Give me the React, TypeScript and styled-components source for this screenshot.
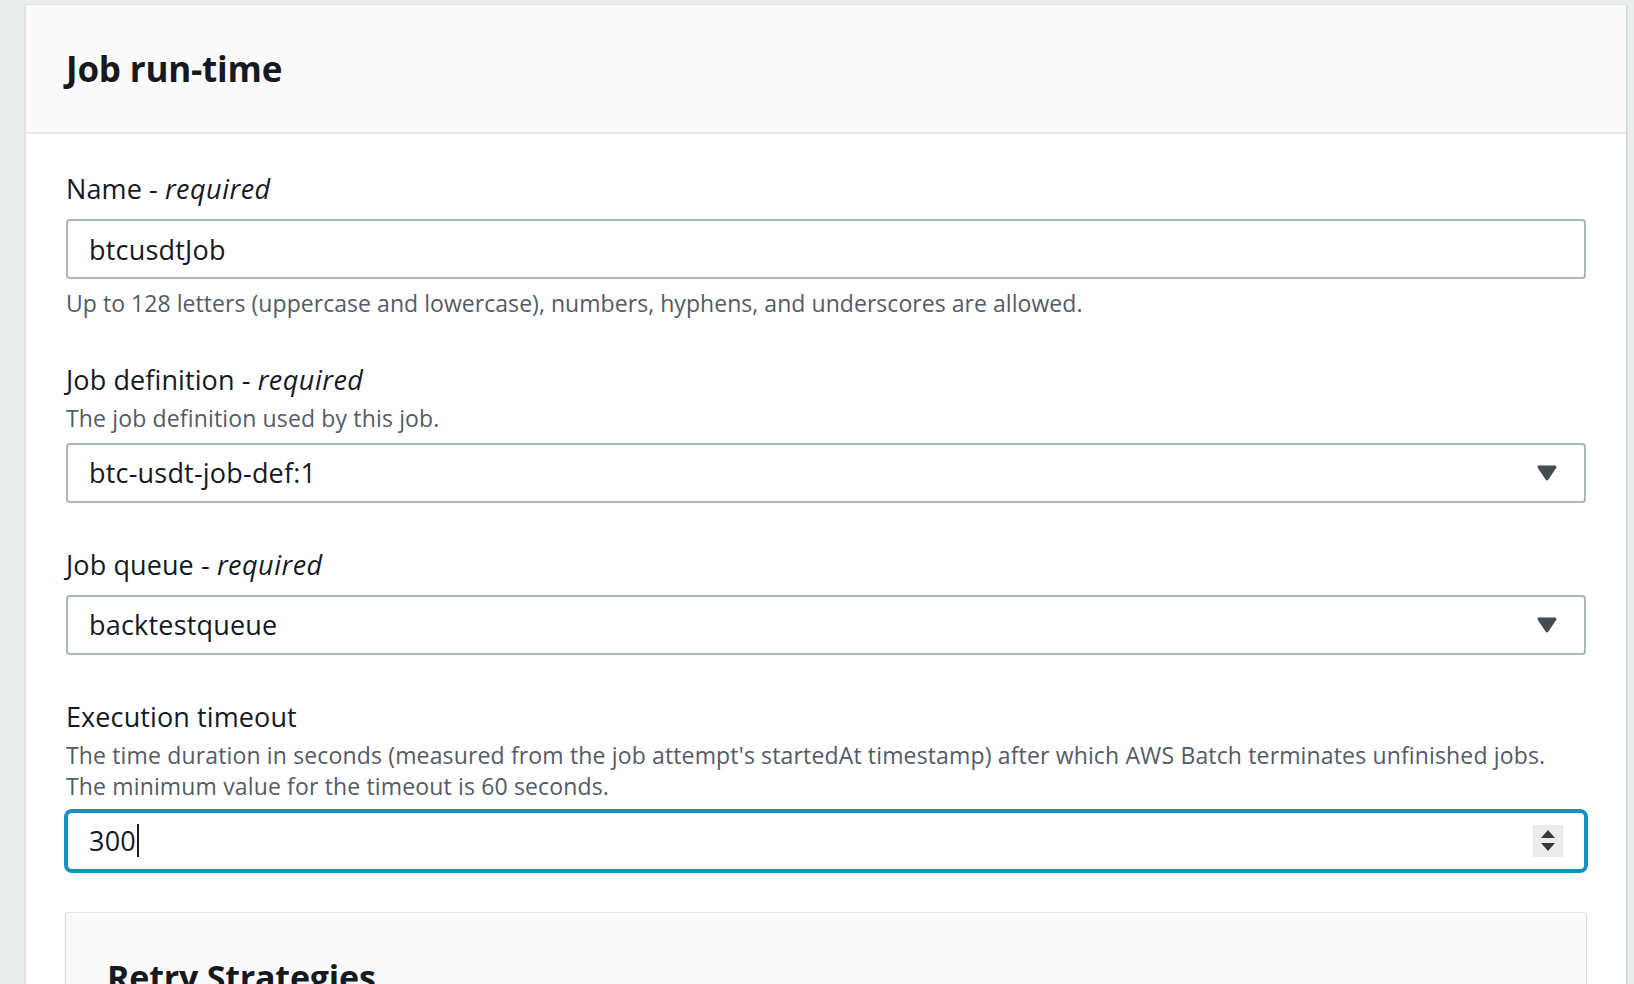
import React from "react";
import styled, { createGlobalStyle } from "styled-components";

const GlobalStyle = createGlobalStyle`
  html, body {
    margin: 0;
    padding: 0;
    background: #eaeded;
    font-family: "Open Sans", "Noto Sans", sans-serif;
    color: #16191f;
  }
  body { overflow: hidden; }
`;

const Page = styled.div`
  height: 984px;
  overflow: hidden;
  padding: 4px 7px 0 25px;
  box-sizing: border-box;
`;

const Card = styled.section`
  background: #ffffff;
  border: 1px solid #dfe2e2;
  border-right-color: #cfd4d4;
  box-shadow: 0 1px 1px 0 rgba(0, 28, 36, 0.25);
  min-height: 1200px;
`;

const Header = styled.header`
  height: 127px;
  display: flex;
  align-items: center;
  padding: 0 40px;
  background: #fafafa;
  border-bottom: 2px solid #e6e9e9;
`;

const Title = styled.h2`
  margin: 0;
  font-size: 35px;
  font-weight: 700;
  line-height: 44px;
  letter-spacing: -0.2px;
  color: #16191f;
`;

const Body = styled.div`
  padding: 39px 40px 0 40px;
  display: flex;
  flex-direction: column;
  gap: 46px;
`;

const Field = styled.div`
  display: flex;
  flex-direction: column;
`;

const Label = styled.label`
  font-size: 27px;
  line-height: 32px;
  letter-spacing: 0.1px;
  color: #16191f;
  em {
    font-style: italic;
    letter-spacing: 0.5px;
  }
`;

const Description = styled.div`
  margin-top: 7px;
  font-size: 23px;
  line-height: 31.5px;
  letter-spacing: 0.15px;
  color: #545b64;
`;

const Help = styled.div`
  margin-top: 9px;
  font-size: 23px;
  line-height: 30px;
  letter-spacing: 0.05px;
  color: #545b64;
`;

const Control = styled.div<{ $focused?: boolean; $gap: number }>`
  margin-top: ${(p) => p.$gap}px;
  height: 60px;
  box-sizing: border-box;
  display: flex;
  align-items: center;
  padding: 0 21px;
  border: 2px solid ${(p) => (p.$focused ? "#1590c2" : "#aab7b8")};
  border-radius: ${(p) => (p.$focused ? "6px" : "4px")};
  box-shadow: ${(p) => (p.$focused ? "0 0 0 2px #1590c2" : "none")};
  background: #ffffff;
  font-size: 27px;
  letter-spacing: 0.2px;
  color: #16191f;
`;

const Value = styled.span`
  flex: 1;
  display: flex;
  align-items: center;
  white-space: nowrap;
`;

const Caret = styled.span`
  display: inline-block;
  width: 2px;
  height: 33px;
  background: #16191f;
  margin-left: 1px;
`;

const Arrow = styled.svg`
  width: 20px;
  height: 16px;
  margin-right: 6px;
  flex: none;
`;

const Stepper = styled.div`
  width: 30px;
  height: 32px;
  background: #ececec;
  display: flex;
  flex-direction: column;
  align-items: center;
  justify-content: center;
  gap: 5px;
  flex: none;
`;

const StepTri = styled.svg`
  width: 14px;
  height: 8px;
  display: block;
`;

const SubCard = styled.section`
  margin-top: 41px;
  background: #fafafa;
  border-top: 1px solid #e3e6e6;
  box-shadow: 0 1px 1px 0 rgba(0, 28, 36, 0.2), 1px 1px 1px 0 rgba(0, 28, 36, 0.12),
    -1px 1px 1px 0 rgba(0, 28, 36, 0.12);
`;

const SubHeader = styled.div`
  height: 128px;
  display: flex;
  align-items: center;
  padding: 0 41px;
`;

const SubTitle = styled(Title)`
  font-size: 34px;
`;

const DropArrow = () => (
  <Arrow viewBox="0 0 20 16">
    <path
      d="M2 2 L18 2 L10 14 Z"
      fill="#444b53"
      stroke="#444b53"
      strokeWidth="3"
      strokeLinejoin="round"
    />
  </Arrow>
);

const Spin = () => (
  <Stepper>
    <StepTri viewBox="0 0 14 8">
      <path d="M7 0 L14 8 L0 8 Z" fill="#3a3a3a" />
    </StepTri>
    <StepTri viewBox="0 0 14 8">
      <path d="M0 0 L14 0 L7 8 Z" fill="#3a3a3a" />
    </StepTri>
  </Stepper>
);

export default function App() {
  return (
    <>
      <GlobalStyle />
      <Page>
        <Card>
          <Header>
            <Title>Job run-time</Title>
          </Header>
          <Body>
            <Field>
              <Label>
                Name - <em>required</em>
              </Label>
              <Control $gap={14}>
                <Value>btcusdtJob</Value>
              </Control>
              <Help>
                Up to 128 letters (uppercase and lowercase), numbers, hyphens, and underscores are allowed.
              </Help>
            </Field>
            <Field>
              <Label>
                Job definition - <em>required</em>
              </Label>
              <Description>The job definition used by this job.</Description>
              <Control $gap={8}>
                <Value>btc-usdt-job-def:1</Value>
                <DropArrow />
              </Control>
            </Field>
            <Field>
              <Label>
                Job queue - <em>required</em>
              </Label>
              <Control $gap={14}>
                <Value>backtestqueue</Value>
                <DropArrow />
              </Control>
            </Field>
            <Field>
              <Label>Execution timeout</Label>
              <Description>
                The time duration in seconds (measured from the job attempt's startedAt timestamp) after which AWS
                Batch terminates unfinished jobs.
                <br />
                The minimum value for the timeout is 60 seconds.
              </Description>
              <Control $gap={8} $focused>
                <Value>
                  300
                  <Caret />
                </Value>
                <Spin />
              </Control>
              <SubCard>
                <SubHeader>
                  <SubTitle>Retry Strategies</SubTitle>
                </SubHeader>
              </SubCard>
            </Field>
          </Body>
        </Card>
      </Page>
    </>
  );
}
